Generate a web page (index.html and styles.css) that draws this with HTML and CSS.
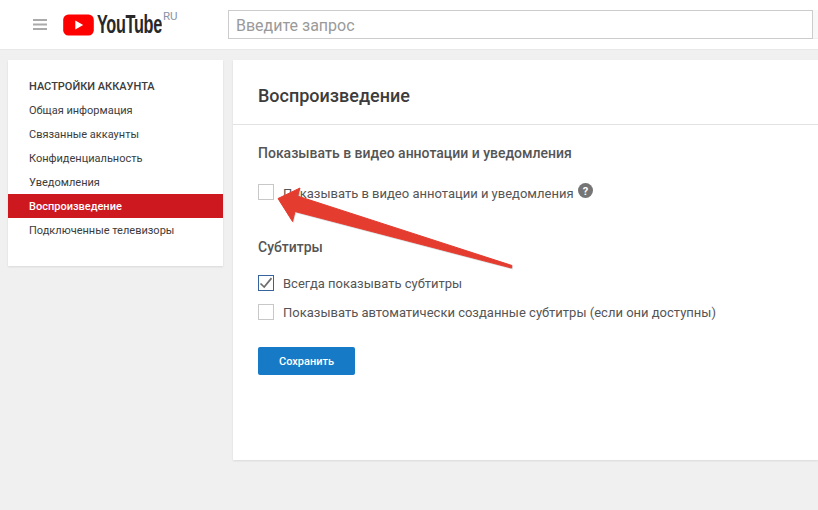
FILE: index.html
```html
<!DOCTYPE html>
<html lang="ru">
<head>
    <meta charset="UTF-8">
    <meta name="viewport" content="width=device-width, initial-scale=1.0">
    <title>Воспроизведение</title>
    <link rel="stylesheet" href="styles.css">
</head>
<body>
    <header class="topbar">
        <svg class="menu-icon" width="15" height="11" viewBox="0 0 15 11">
            <path d="M0 0h14v2H0zM0 4.500h14v2H0zM0 9h14v2H0z" fill="#aaa"/>
        </svg>
        <a class="logo">
            <svg width="31" height="22" viewBox="0 0 32 23">
                <rect width="32" height="22" y="0.500" rx="5.500" fill="#f00"/>
                <path d="M12.700 6.800v9.400l8.200-4.700z" fill="#fff"/>
            </svg>
            <span class="logo-text">YouTube</span>
            <span class="logo-country">RU</span>
        </a>
        <div class="search">
            <div class="search-input">Введите запрос</div>
            <div class="search-btn"></div>
        </div>
    </header>

    <div class="content">
        <nav class="sidebar">
            <h3>НАСТРОЙКИ АККАУНТА</h3>
            <a class="nav-item">Общая информация</a>
            <a class="nav-item">Связанные аккаунты</a>
            <a class="nav-item">Конфиденциальность</a>
            <a class="nav-item">Уведомления</a>
            <a class="nav-item active">Воспроизведение</a>
            <a class="nav-item">Подключенные телевизоры</a>
        </nav>

        <main class="panel">
            <h1>Воспроизведение</h1>
            <div class="panel-body">
                <h2>Показывать в видео аннотации и уведомления</h2>
                <label class="check-row first">
                    <span class="box"></span>
                    <span class="first-label">Показывать в видео аннотации и уведомления</span>
                    <svg class="help" width="15" height="15" viewBox="0 0 15 15">
                        <circle cx="7.500" cy="7.500" r="7.500" fill="#757575"/>
                        <text x="7.500" y="11.500" text-anchor="middle" class="help-mark">?</text>
                    </svg>
                </label>

                <h2 class="subs">Субтитры</h2>
                <label class="check-row">
                    <span class="box checked">
                        <svg width="16" height="16" viewBox="0 0 16 16">
                            <path d="M2.500 8.500l3.700 3.600 7.300-9" fill="none" stroke="#6e6e6e" stroke-width="1.700"/>
                        </svg>
                    </span>
                    <span>Всегда показывать субтитры</span>
                </label>
                <label class="check-row">
                    <span class="box"></span>
                    <span>Показывать автоматически созданные субтитры (если они доступны)</span>
                </label>

                <button class="save-btn">Сохранить</button>
            </div>
        </main>
    </div>

    <!-- red annotation arrow on top of the screenshot -->
    <svg class="arrow" width="818" height="510" viewBox="0 0 818 510">
        <path class="arrow-shadow" d="M278 198.500L300 188L297.500 196L512 265.500L511.500 268L295 211.500L292.500 221.500z" transform="translate(1 1.500)"/>
        <path class="arrow-body" d="M278 198.500L300 188L297.500 196L512 265.500L511.500 268L295 211.500L292.500 221.500z"/>
    </svg>
</body>
</html>
```

FILE: styles.css
```css
* {
    box-sizing: border-box;
}
html, body {
    height: 100%;
}
body {
    margin: 0;
    background-color: #f0f0f0;
    font-family: Roboto, Arial, sans-serif;
    color: #3c3c3c;
    overflow: hidden;
}
.topbar {
    display: flex;
    align-items: center;
    height: 50px;
    padding-left: 33px;
    background-color: #fff;
    border-bottom: 1px solid #e8e8e8;
}
.menu-icon {
    flex: none;
    margin-right: 15px;
}
.logo {
    display: flex;
    align-items: center;
    flex: none;
    position: relative;
    width: 165px;
}
.logo-text {
    margin-left: 3px;
    font-family: "Liberation Sans", sans-serif;
    font-size: 26px;
    font-weight: bold;
    letter-spacing: -0.500px;
    color: #282828;
    transform: scaleX(0.625);
    transform-origin: left center;
}
.logo-country {
    position: absolute;
    left: 100px;
    top: 0;
    font-size: 11.500px;
    color: #8a94a6;
}
.search {
    display: flex;
    flex: none;
    width: 600px;
}
.search-input {
    width: 585px;
    height: 29px;
    padding-left: 7px;
    border: 1px solid #ccc;
    font-size: 16px;
    line-height: 29px;
    color: #9a9a9a;
}
.search-btn {
    flex: 1;
    height: 29px;
    background-color: #f8f8f8;
    border-bottom: 1px solid #eee;
}
.content {
    display: flex;
    align-items: flex-start;
    gap: 10px;
    padding: 10px 0 0 8px;
}
.sidebar {
    display: flex;
    flex-direction: column;
    flex: none;
    width: 215px;
    height: 206px;
    padding-top: 14px;
    background-color: #fff;
    box-shadow: 0 1px 2px rgba(0,0,0,0.1);
}
.sidebar h3 {
    margin: 0;
    padding-left: 21px;
    height: 24px;
    font-size: 11px;
    font-weight: 500;
    line-height: 26px;
}
.nav-item {
    height: 24px;
    padding-left: 21px;
    font-size: 11px;
    line-height: 26px;
}
.nav-item.active {
    background-color: #cc181e;
    color: #fff;
    font-weight: 500;
}
.panel {
    flex: 1;
    height: 400px;
    background-color: #fff;
    box-shadow: 0 1px 2px rgba(0,0,0,0.1);
}
.panel h1 {
    margin: 0;
    height: 65px;
    padding: 25px 0 0 25px;
    font-size: 18px;
    font-weight: 500;
    line-height: 21px;
    border-bottom: 1px solid #e2e2e2;
}
.panel-body {
    padding: 20px 25px;
}
.panel-body h2 {
    margin: 0;
    font-size: 14px;
    font-weight: 500;
    line-height: 17px;
    color: #555;
}
.panel-body h2.subs {
    margin-top: 39px;
    margin-bottom: 19px;
}
.check-row {
    display: flex;
    align-items: center;
    height: 16px;
    margin-bottom: 13px;
    font-size: 13px;
    color: #555;
    white-space: nowrap;
}
.check-row.first {
    margin-top: 22px;
    margin-bottom: 0;
}
.first-label {
    padding-top: 2px;
}
.box {
    flex: none;
    width: 16px;
    height: 16px;
    margin-right: 9px;
    border: 1px solid #c8c8c8;
    background-color: #fff;
}
.box.checked {
    border-color: #36639c;
}
.box svg {
    display: block;
    margin: -1px;
}
.help {
    flex: none;
    margin: -4px 0 0 4px;
}
.help-mark {
    font-size: 11px;
    font-weight: bold;
    fill: #fff;
}
.save-btn {
    display: block;
    width: 97px;
    height: 28px;
    margin-top: 27px;
    border: none;
    border-radius: 2px;
    background-color: #167ac6;
    color: #fff;
    font-family: inherit;
    font-size: 11px;
    font-weight: 500;
}
.arrow {
    position: absolute;
    left: 0;
    top: 0;
    pointer-events: none;
}
.arrow-shadow {
    fill: #b9b9b9;
    opacity: 0.6;
}
.arrow-body {
    fill: #e53c30;
    stroke: #e53c30;
    stroke-width: 1;
    stroke-linejoin: round;
}
```
